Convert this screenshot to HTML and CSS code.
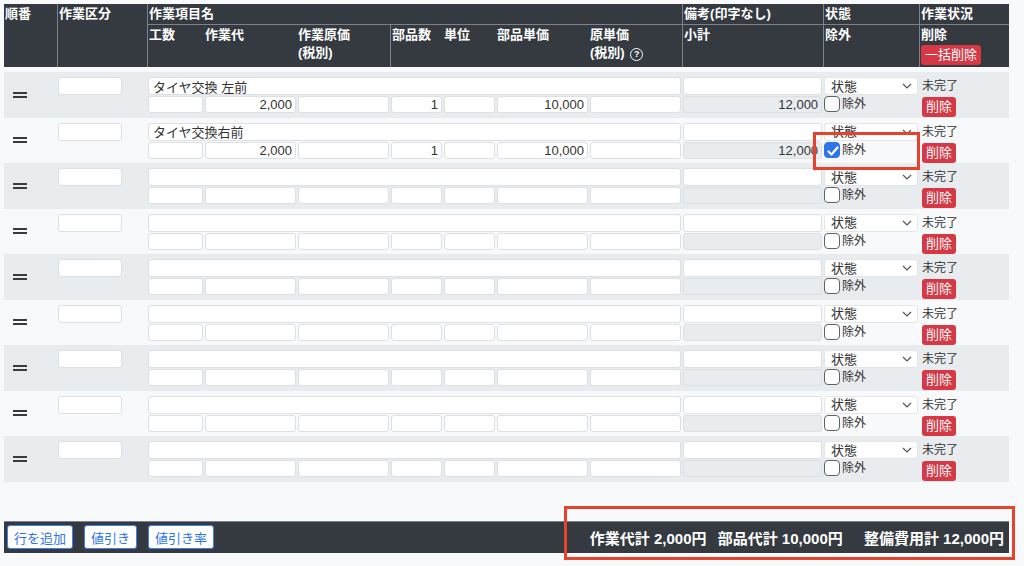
FILE: index.html
```html
<!DOCTYPE html>
<html lang="ja">
<head>
    <meta charset="UTF-8">
    <title>整備見積</title>
    <link rel="stylesheet" href="styles.css">
</head>
<body>
    <table class="estimate-table">
        <colgroup>
            <col class="w-no"><col class="w-kubun">
            <col class="w-kosu"><col class="w-wide"><col class="w-wide">
            <col class="w-narrow"><col class="w-narrow"><col class="w-wide"><col class="w-wide">
            <col class="w-note"><col class="w-state"><col class="w-status">
        </colgroup>
        <thead>
            <tr class="head-top">
                <th rowspan="2">順番</th>
                <th rowspan="2" class="sep">作業区分</th>
                <th colspan="7" class="sep">作業項目名</th>
                <th class="sep">備考(印字なし)</th>
                <th class="sep">状態</th>
                <th class="sep">作業状況</th>
            </tr>
            <tr class="head-sub">
                <th class="sep">工数</th>
                <th>作業代</th>
                <th>作業原価<br>(税別)</th>
                <th class="sep">部品数</th>
                <th>単位</th>
                <th>部品単価</th>
                <th>原単価<br>(税別) <span class="help-icon">?</span></th>
                <th class="sep">小計</th>
                <th class="sep">除外</th>
                <th class="sep">削除<button class="btn-danger btn-bulk">一括削除</button></th>
            </tr>
            <tr class="head-gap"><td colspan="12"></td></tr>
        </thead>
    </table>

    <div class="footer-bar">
        <div class="footer-actions">
            <button class="btn-outline">行を追加</button>
            <button class="btn-outline">値引き</button>
            <button class="btn-outline">値引き率</button>
        </div>
        <div class="totals">
            <span>作業代計 2,000円</span>
            <span class="total-parts">部品代計 10,000円</span>
            <span class="total-all">整備費用計 12,000円</span>
        </div>
    </div>

    <div class="mark mark-check"></div>
    <div class="mark mark-total"></div>

    <script>
        const items = [
            { name: 'タイヤ交換 左前', labor: '2,000', qty: '1', price: '10,000', subtotal: '12,000', excluded: false },
            { name: 'タイヤ交換右前', labor: '2,000', qty: '1', price: '10,000', subtotal: '12,000', excluded: true }
        ];
        while (items.length < 9) {
            items.push({ name: '', labor: '', qty: '', price: '', subtotal: '', excluded: false });
        }

        const table = document.querySelector('.estimate-table');

        items.forEach(item => {
            const tbody = document.createElement('tbody');
            tbody.className = 'item';
            tbody.innerHTML = `
                <tr class="item-top">
                    <td rowspan="2" class="handle-cell"><span class="handle"></span></td>
                    <td rowspan="2"><input class="form-input kubun-input" type="text"></td>
                    <td colspan="7"><input class="form-input" type="text" value="${item.name}"></td>
                    <td><input class="form-input" type="text"></td>
                    <td>
                        <select class="form-select">
                            <option>状態</option>
                        </select>
                    </td>
                    <td class="status-cell">未完了</td>
                </tr>
                <tr class="item-bottom">
                    <td><input class="form-input" type="text"></td>
                    <td><input class="form-input num" type="text" value="${item.labor}"></td>
                    <td><input class="form-input num" type="text"></td>
                    <td><input class="form-input num" type="text" value="${item.qty}"></td>
                    <td><input class="form-input" type="text"></td>
                    <td><input class="form-input num" type="text" value="${item.price}"></td>
                    <td><input class="form-input num" type="text"></td>
                    <td><input class="form-input num readonly" type="text" value="${item.subtotal}" readonly></td>
                    <td><label class="check-label"><input type="checkbox" class="check" ${item.excluded ? 'checked' : ''}>除外</label></td>
                    <td class="status-cell"><button class="btn-danger">削除</button></td>
                </tr>`;
            table.appendChild(tbody);
        });
    </script>
</body>
</html>
```

FILE: styles.css
```css
body {
    margin: 0;
    padding: 4px;
    background-color: #f8f9fa;
    font-family: "Liberation Sans", "Noto Sans CJK JP", sans-serif;
    font-size: 13px;
    color: #333;
}

.estimate-table {
    width: 1005px;
    border-collapse: separate;
    border-spacing: 0;
    table-layout: fixed;
}

.w-no { width: 53px; }
.w-kubun { width: 90px; }
.w-kosu { width: 57px; }
.w-wide { width: 93px; }
.w-narrow { width: 53px; }
.w-note { width: 141px; }
.w-state { width: 96px; }
.w-status { width: 90px; }

/* header */
.estimate-table th {
    background-color: #343a40;
    color: #fff;
    font-weight: bold;
    font-size: 13px;
    line-height: 18px;
    text-align: left;
    vertical-align: top;
    padding: 1px 1px;
    white-space: nowrap;
}

.estimate-table th.sep {
    border-left: 1px solid #7d8288;
}

.head-top th:not([rowspan]) {
    border-bottom: 1px solid #7d8288;
}

.head-sub th {
    padding-bottom: 2px;
}

.head-gap td {
    height: 5px;
    padding: 0;
}

.help-icon {
    display: inline-block;
    width: 11px;
    height: 11px;
    border: 1.5px solid #fff;
    border-radius: 50%;
    font-size: 9px;
    line-height: 11px;
    text-align: center;
    vertical-align: 0;
    margin-left: 2px;
}

.btn-bulk {
    display: block;
    margin-top: 1px;
    height: 20px;
    padding: 0 5px;
}

/* body rows */
.item:nth-of-type(odd) td {
    background-color: #e9ecef;
}

.item td {
    padding: 0 1px;
    vertical-align: top;
}

.item-top {
    height: 23px;
}

.item-top td {
    padding-top: 5px;
}

.item-bottom {
    height: 22.5px;
}

.item-bottom td {
    padding-top: 1px;
}

.handle-cell {
    vertical-align: middle !important;
    padding-left: 9px !important;
    padding-bottom: 5px !important;
}

.handle {
    display: block;
    width: 14px;
    height: 2px;
    border-top: 2px solid #3a3a3a;
    border-bottom: 2px solid #3a3a3a;
}

.form-input {
    display: block;
    width: 100%;
    height: 18px;
    box-sizing: border-box;
    border: 1px solid #dcdfe3;
    border-radius: 3px;
    background-color: #fff;
    font-family: inherit;
    font-size: 13px;
    color: #333;
    padding: 0 4px;
    margin: 0;
}

.item-bottom .form-input {
    height: 17px;
}

.kubun-input {
    width: 64px;
}

.form-input.num {
    text-align: right;
    padding-right: 3px;
}

.form-input.readonly {
    background-color: #e9ecef;
}

.form-select {
    display: block;
    width: 100%;
    height: 18px;
    box-sizing: border-box;
    appearance: none;
    -webkit-appearance: none;
    border: 1px solid #e3e5e8;
    border-radius: 3px;
    background-color: #fff;
    background-image: url("data:image/svg+xml,%3Csvg xmlns='http://www.w3.org/2000/svg' width='10' height='6' viewBox='0 0 10 6'%3E%3Cpath d='M1 1l4 4 4-4' fill='none' stroke='%23555' stroke-width='1.2'/%3E%3C/svg%3E");
    background-repeat: no-repeat;
    background-position: right 5px center;
    font-family: inherit;
    font-size: 13px;
    color: #333;
    padding: 0 6px;
    margin: 0;
}

.status-cell {
    padding-left: 3px !important;
    line-height: 18px;
    font-size: 12px;
    color: #333;
}

.check-label {
    display: flex;
    align-items: center;
    gap: 2px;
    font-size: 12px;
    color: #333;
    line-height: 16px;
}

.check {
    appearance: none;
    -webkit-appearance: none;
    width: 16px;
    height: 16px;
    margin: 0;
    border: 1px solid #5f6368;
    border-radius: 4px;
    background-color: #fff;
}

.check:checked {
    border-color: #2f74e8;
    background-color: #2f74e8;
    background-image: url("data:image/svg+xml,%3Csvg xmlns='http://www.w3.org/2000/svg' width='16' height='16' viewBox='0 0 16 16'%3E%3Cpath d='M3.5 8.5l3 3 6-7' fill='none' stroke='%23fff' stroke-width='2.2' stroke-linecap='round' stroke-linejoin='round'/%3E%3C/svg%3E");
}

.btn-danger {
    display: block;
    height: 20px;
    margin-top: 1px;
    padding: 0 4px;
    border: none;
    border-radius: 3px;
    background-color: #d63845;
    color: #fff;
    font-family: inherit;
    font-size: 13px;
    line-height: 20px;
}

/* footer */
.footer-bar {
    width: 1005px;
    height: 32px;
    box-sizing: border-box;
    margin-top: 39px;
    background-color: #343a40;
    border-top: 1px solid #7d8288;
    display: flex;
    align-items: center;
    justify-content: space-between;
    padding: 0 5px 0 3px;
}

.footer-actions {
    display: flex;
    gap: 11px;
}

.btn-outline {
    height: 24px;
    padding: 0 6px;
    border: 1px solid #3d82f0;
    border-radius: 3px;
    background-color: #fff;
    color: #2f74e8;
    font-family: inherit;
    font-size: 13px;
}

.totals {
    color: #fff;
    font-weight: bold;
    font-size: 15px;
    white-space: nowrap;
}

.total-parts {
    margin-left: 7px;
}

.total-all {
    margin-left: 17px;
}

/* annotation boxes */
.mark {
    position: absolute;
    box-sizing: border-box;
    border: 3px solid #e8412c;
}

.mark-check {
    left: 813px;
    top: 132px;
    width: 107px;
    height: 38px;
}

.mark-total {
    left: 564px;
    top: 506px;
    width: 451px;
    height: 54px;
}
```
